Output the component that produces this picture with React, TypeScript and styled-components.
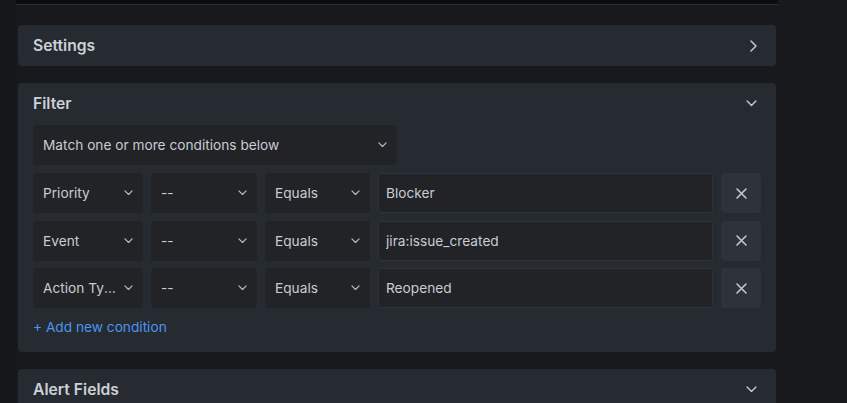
import React from 'react';
import styled, { createGlobalStyle } from 'styled-components';

const GlobalStyle = createGlobalStyle`
  html, body {
    margin: 0;
    padding: 0;
    background: #18191d;
  }
  body {
    font-family: Inter, "Liberation Sans", Arial, sans-serif;
    -webkit-font-smoothing: antialiased;
  }
`;

const conditions = [
  { field: 'Priority', op: '--', match: 'Equals', value: 'Blocker' },
  { field: 'Event', op: '--', match: 'Equals', value: 'jira:issue_created' },
  { field: 'Action Type', op: '--', match: 'Equals', value: 'Reopened' },
];

const ChevronDown = ({ size = 9 }: { size?: number }) => (
  <svg width={size} height={size * 0.6} viewBox="0 0 10 6" fill="none">
    <path d="M1 1l4 4 4-4" stroke="currentColor" strokeWidth="1.3" strokeLinecap="round" strokeLinejoin="round" />
  </svg>
);

const ChevronRight = () => (
  <svg width="7" height="12" viewBox="0 0 7 12" fill="none">
    <path d="M1 1l5 5-5 5" stroke="currentColor" strokeWidth="1.5" strokeLinecap="round" strokeLinejoin="round" />
  </svg>
);

const CloseIcon = () => (
  <svg width="11" height="11" viewBox="0 0 11 11" fill="none">
    <path d="M1 1l9 9M10 1l-9 9" stroke="currentColor" strokeWidth="1.6" strokeLinecap="round" />
  </svg>
);

const Select = ({ label }: { label: string }) => (
  <SelectBox>
    <SelectText>{label}</SelectText>
    <SelectArrow>
      <ChevronDown />
    </SelectArrow>
  </SelectBox>
);

const App = () => {
  return (
    <>
      <GlobalStyle />
      <Page>
        <Gutter />
        <Column>
          <TopBar />
          <Panel>
            <PanelHeader>
              <Title>Settings</Title>
              <HeaderIcon>
                <ChevronRight />
              </HeaderIcon>
            </PanelHeader>
          </Panel>
          <Panel>
            <PanelHeader>
              <Title>Filter</Title>
              <HeaderIcon>
                <ChevronDown size={11} />
              </HeaderIcon>
            </PanelHeader>
            <PanelBody>
              <MatchSelect>
                <Select label="Match one or more conditions below" />
              </MatchSelect>
              <Conditions>
                {conditions.map((c) => (
                  <ConditionRow key={c.value}>
                    <Select label={c.field} />
                    <Select label={c.op} />
                    <Select label={c.match} />
                    <ValueInput readOnly value={c.value} />
                    <RemoveButton>
                      <CloseIcon />
                    </RemoveButton>
                  </ConditionRow>
                ))}
              </Conditions>
              <AddLink>+ Add new condition</AddLink>
            </PanelBody>
          </Panel>
          <Panel>
            <PanelHeader>
              <Title>Alert Fields</Title>
              <HeaderIcon>
                <ChevronDown size={11} />
              </HeaderIcon>
            </PanelHeader>
          </Panel>
        </Column>
      </Page>
    </>
  );
};

export default App;

const Page = styled.div`
  display: flex;
  height: 403px;
  overflow: hidden;
  background: #18191d;
`;

const Gutter = styled.div`
  width: 16px;
  flex-shrink: 0;
  background: #16171b;
`;

const Column = styled.main`
  width: 762px;
  flex-shrink: 0;
  display: flex;
  flex-direction: column;
  gap: 17px;
`;

const TopBar = styled.div`
  height: 4px;
  flex-shrink: 0;
  background: #0b0c0e;
  border-bottom: 1px solid #2b2f36;
  margin-bottom: 3px;
`;

const Panel = styled.section`
  margin: 0 2px;
  background: #262a31;
  border-radius: 4px;
  flex-shrink: 0;
`;

const PanelHeader = styled.header`
  height: 41px;
  padding: 0 15px;
  display: flex;
  align-items: center;
  justify-content: space-between;
`;

const Title = styled.h3`
  margin: 0;
  font-size: 15.7px;
  font-weight: 600;
  color: #cdd0d6;
`;

const HeaderIcon = styled.span`
  display: flex;
  align-items: center;
  color: #c3c7ce;
  margin-right: 4px;
`;

const PanelBody = styled.div`
  padding: 1px 15px 14.5px;
`;

const MatchSelect = styled.div`
  width: 364px;
  margin-bottom: 8px;
`;

const Conditions = styled.div`
  display: flex;
  flex-direction: column;
  gap: 7.5px;
`;

const ConditionRow = styled.div`
  display: grid;
  grid-template-columns: 110px 106px 105px 1fr 40px;
  column-gap: 8px;
  height: 40px;
`;

const SelectBox = styled.div`
  height: 40px;
  box-sizing: border-box;
  padding: 0 10px;
  background: #212327;
  border-radius: 4px;
  display: flex;
  align-items: center;
  gap: 6px;
  min-width: 0;
`;

const SelectText = styled.span`
  flex: 1;
  min-width: 0;
  font-size: 13.7px;
  color: #c8ccd3;
  white-space: nowrap;
  overflow: hidden;
  text-overflow: ellipsis;
`;

const SelectArrow = styled.span`
  display: flex;
  color: #b9bdc5;
`;

const ValueInput = styled.input`
  height: 40px;
  box-sizing: border-box;
  padding: 0 7px;
  background: #212327;
  border: 1px solid #2e3239;
  border-radius: 3px;
  font-family: inherit;
  font-size: 13.7px;
  color: #c8ccd3;
  outline: none;
  min-width: 0;
`;

const RemoveButton = styled.button`
  height: 40px;
  padding: 0;
  border: none;
  border-radius: 4px;
  background: #2e333b;
  color: #c3c7ce;
  display: flex;
  align-items: center;
  justify-content: center;
  cursor: pointer;
`;

const AddLink = styled.a`
  display: block;
  margin-top: 9px;
  line-height: 20px;
  font-size: 13.7px;
  color: #4b96f0;
  cursor: pointer;
`;
